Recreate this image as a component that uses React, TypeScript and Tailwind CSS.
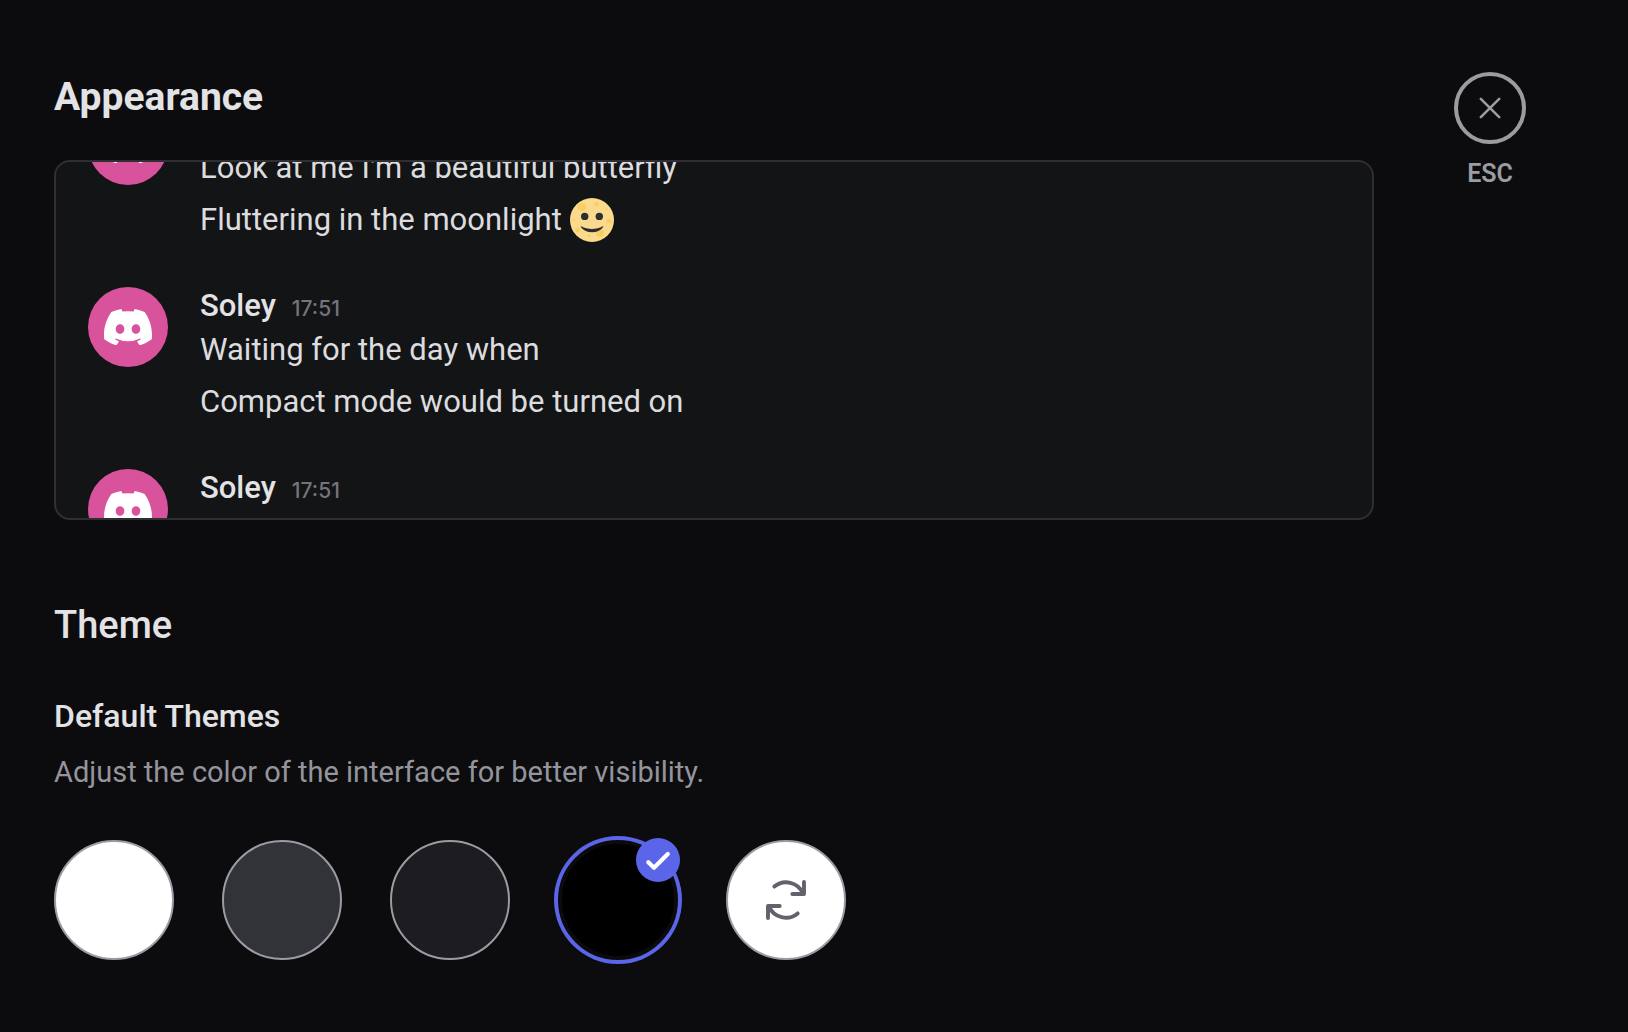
import { useState } from "react";

type Message = { id: number; author?: string; time?: string; lines: string[]; moon?: boolean };

const messages: Message[] = [
  {
    id: 1,
    lines: ["Look at me I'm a beautiful butterfly", "Fluttering in the moonlight"],
    moon: true,
  },
  {
    id: 2,
    author: "Soley",
    time: "17:51",
    lines: ["Waiting for the day when", "Compact mode would be turned on"],
  },
  { id: 3, author: "Soley", time: "17:51", lines: [] },
];

const themes = [
  { id: "light", label: "Light", fill: "bg-white" },
  { id: "ash", label: "Ash", fill: "bg-[#323339]" },
  { id: "dark", label: "Dark", fill: "bg-[#1c1c21]" },
  { id: "onyx", label: "Onyx", fill: "bg-black" },
  { id: "system", label: "Sync with computer", fill: "bg-white" },
];

function Avatar() {
  return (
    <div className="mt-[3px] flex size-20 shrink-0 items-center justify-center rounded-full bg-[#d9529c]">
      <svg viewBox="0 0 127.14 96.36" className="w-12" fill="white" aria-hidden="true">
        <path d="M107.7,8.07A105.15,105.15,0,0,0,81.47,0a72.06,72.06,0,0,0-3.36,6.83A97.68,97.68,0,0,0,49,6.83,72.37,72.37,0,0,0,45.64,0,105.89,105.89,0,0,0,19.39,8.09C2.79,32.65-1.71,56.6.54,80.21h0A105.73,105.73,0,0,0,32.71,96.36,77.7,77.7,0,0,0,39.6,85.25a68.42,68.42,0,0,1-10.85-5.18c.91-.66,1.8-1.34,2.66-2a75.57,75.57,0,0,0,64.32,0c.87.71,1.76,1.39,2.66,2a68.68,68.68,0,0,1-10.87,5.19,77,77,0,0,0,6.89,11.1A105.25,105.25,0,0,0,126.6,80.22h0C129.24,52.84,122.09,29.11,107.7,8.07ZM42.45,65.69C36.18,65.69,31,60,31,53s5-12.74,11.43-12.74S54,46,53.89,53,48.84,65.69,42.45,65.69Zm42.24,0C78.41,65.69,73.25,60,73.25,53s5-12.74,11.44-12.74S96.23,46,96.12,53,91.08,65.69,84.69,65.69Z" />
      </svg>
    </div>
  );
}

function MoonFace() {
  return (
    <svg viewBox="0 0 44 44" className="size-11 shrink-0" role="img" aria-label="Full moon with face">
      <circle cx="22" cy="22" r="22" fill="#fbda8d" />
      <g fill="#f9cf63">
        <circle cx="12" cy="9" r="4.3" />
        <circle cx="26.7" cy="6.3" r="2.4" />
        <circle cx="36.5" cy="11" r="1.2" />
        <circle cx="39" cy="23" r="2.4" />
        <circle cx="30" cy="35" r="4.2" />
        <circle cx="19.3" cy="38" r="1.3" />
        <circle cx="7.5" cy="32" r="2.4" />
        <circle cx="3.7" cy="22" r="1.3" />
      </g>
      <g fill="#292f33">
        <circle cx="14.7" cy="18.4" r="3.7" />
        <circle cx="29.3" cy="18.4" r="3.7" />
        <path d="M11.3 28.3c6.2 3.6 15.2 3.6 21.4 0 .5-.2.8.2.5.7-2.3 3.5-6.7 5.2-11.2 5.2s-8.9-1.7-11.2-5.2c-.3-.5 0-.9.5-.7Z" />
      </g>
    </svg>
  );
}

function MessageRow({ message }: { message: Message }) {
  return (
    <li className="flex items-start gap-8">
      <Avatar />
      <div className="min-w-0 text-[31px] leading-[44px]">
        <div className="flex h-11 items-baseline gap-4">
          {message.author && <span className="font-medium text-[#e3e3e6]">{message.author}</span>}
          {message.time && (
            <time className="font-['Inter',sans-serif] text-[21px] leading-8 font-medium text-[#74747d]">{message.time}</time>
          )}
        </div>
        <div className="flex flex-col gap-2 text-[#dcdcdf]">
          {message.lines.map((line, i) => (
            <p key={line} className="flex items-center gap-2">
              {line}
              {message.moon && i === message.lines.length - 1 && <MoonFace />}
            </p>
          ))}
        </div>
      </div>
    </li>
  );
}

function CheckBadge() {
  return (
    <span className="pointer-events-none absolute -top-0.5 -right-0.5 size-11 rounded-full bg-[#5b65ea]">
      <svg viewBox="0 0 44 44" fill="none" stroke="white" strokeWidth="4.2" strokeLinecap="round" strokeLinejoin="round" aria-hidden="true">
        <path d="M12.3 24.2L18 29.8L31.8 16" />
      </svg>
    </span>
  );
}

function SyncIcon() {
  return (
    <span className="pointer-events-none absolute inset-0 flex items-center justify-center text-[#62626c]">
      <svg viewBox="0 0 48 48" className="size-12" fill="none" stroke="currentColor" strokeWidth="3.9" strokeLinecap="round" strokeLinejoin="round" aria-hidden="true">
        <path d="M12.3 10.6A18.4 18.4 0 0 1 41 17.5M42 6V18H30.3" />
        <path d="M35.7 37.4A18.4 18.4 0 0 1 7 30.5M6 42V30H17.7" />
      </svg>
    </span>
  );
}

export default function App() {
  const [selected, setSelected] = useState("onyx");

  return (
    <div className="flex min-h-screen items-start gap-20 bg-[#0c0c0e] pr-[102px] pb-[72px] pl-[54px] font-['Roboto',sans-serif] text-[#e3e3e6]">
      <main className="min-w-0 flex-1 pt-[73px]">
        <h1 className="text-[39px] leading-[48px] font-bold">Appearance</h1>

        <section aria-label="Message preview" className="mt-[39px] h-[360px] overflow-hidden rounded-2xl border-2 border-[#2f2f33] bg-[#131416] px-8">
          <ul className="-mt-[60px] flex flex-col gap-[42px]">
            {messages.map((m) => (
              <MessageRow key={m.id} message={m} />
            ))}
          </ul>
        </section>

        <h2 className="mt-[81px] text-[38px] leading-[48px] font-medium">Theme</h2>

        <fieldset className="mt-[47px]">
          <legend className="text-[32px] leading-10 font-medium">Default Themes</legend>
          <p className="pt-[18px] text-[29px] leading-9 text-[#94949c]">
            Adjust the color of the interface for better visibility.
          </p>
          <div className="mt-[50px] flex flex-wrap gap-12">
            {themes.map((theme) => (
              <label key={theme.id} className="relative size-[120px]">
                <input
                  type="radio"
                  name="theme"
                  value={theme.id}
                  aria-label={theme.label}
                  checked={selected === theme.id}
                  onChange={() => setSelected(theme.id)}
                  className={`block size-full cursor-pointer appearance-none rounded-full border-2 border-[#9b9ba3] checked:border-4 checked:border-[#0b0b0d] checked:ring-4 checked:ring-[#5b65ea] ${theme.fill}`}
                />
                {theme.id === "system" && <SyncIcon />}
                {selected === theme.id && <CheckBadge />}
              </label>
            ))}
          </div>
        </fieldset>
      </main>

      <div className="flex w-[72px] flex-col items-center gap-3.5 pt-[72px] text-[#9b9ba2]">
        <button type="button" aria-label="Close" className="flex size-[72px] cursor-pointer items-center justify-center rounded-full border-4 border-[#9b9ba2]">
          <svg viewBox="0 0 24 24" className="size-6" fill="none" stroke="currentColor" strokeWidth="2.6" strokeLinecap="round" aria-hidden="true">
            <path d="M2.8 2.8L21.2 21.2M21.2 2.8L2.8 21.2" />
          </svg>
        </button>
        <span className="text-[25px] leading-8 font-semibold">ESC</span>
      </div>
    </div>
  );
}
